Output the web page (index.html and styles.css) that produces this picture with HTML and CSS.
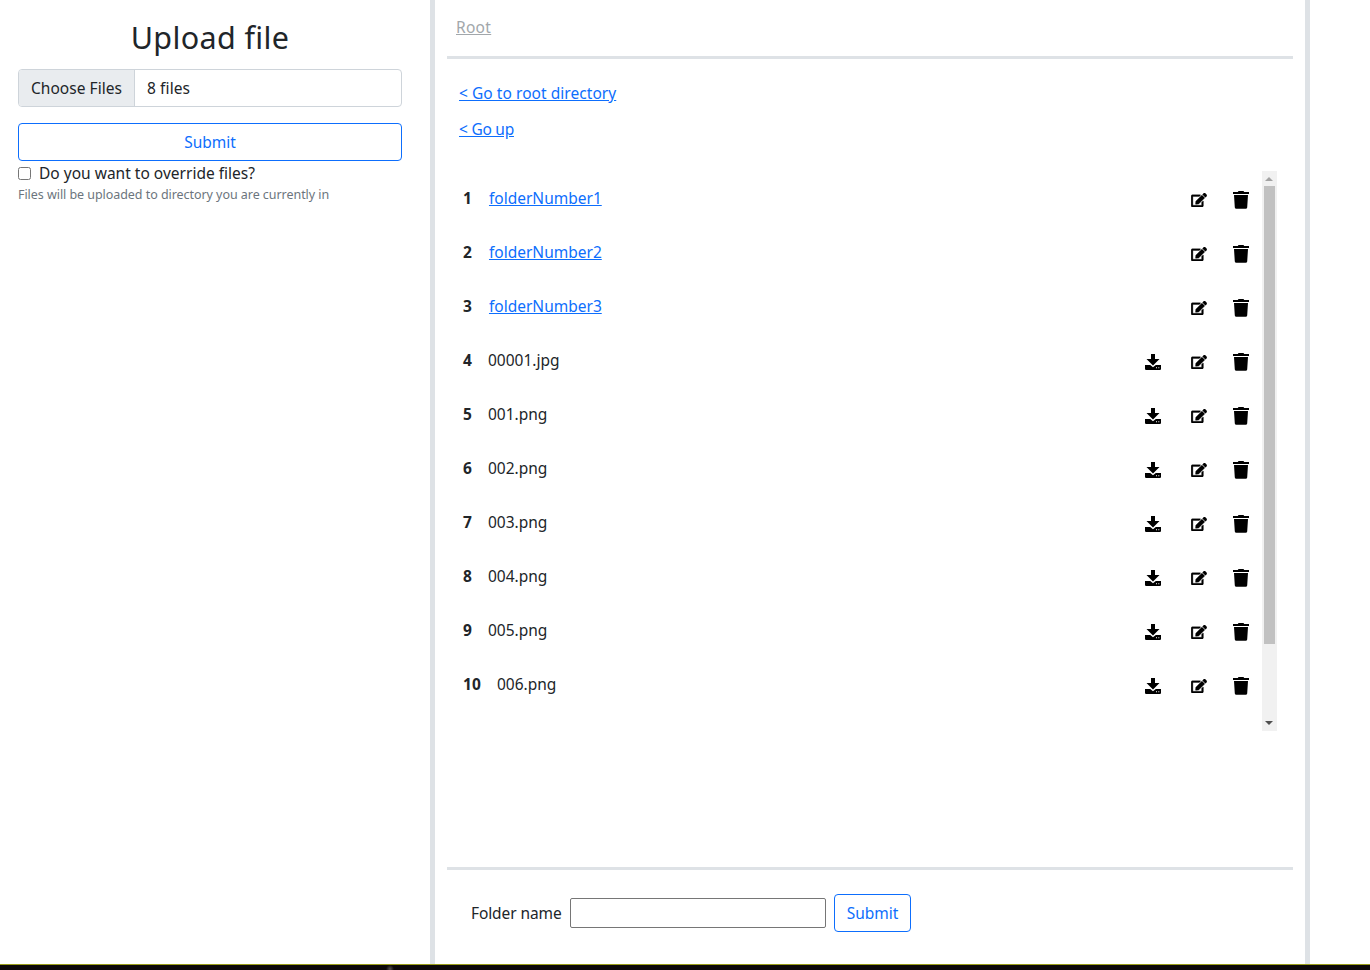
FILE: index.html
```html
<!DOCTYPE html>
<html lang="en">
<head>
<meta charset="utf-8">
<title>Files</title>
<link rel="stylesheet" href="styles.css">
</head>
<body>
<svg class="sprite" aria-hidden="true">
  <symbol id="download" viewBox="0 0 16 16"><path d="M6 0h4v5h4.500L8 11.500 1.500 5H6z"/><path d="M0 11h5.200L8 13.200 10.800 11H16v4.200l-.8.8H.8l-.8-.8zM11 13.200v1h1v-1zM13.300 13.200v1h1v-1z" fill-rule="evenodd"/></symbol>
  <symbol id="edit" viewBox="0 0 576 512"><path d="M402.600 83.200l90.200 90.200c3.800 3.800 3.800 10 0 13.800L274.400 405.600l-92.800 10.300c-12.400 1.400-22.900-9.100-21.500-21.500l10.300-92.800L388.800 83.200c3.800-3.800 10-3.800 13.800 0zm162-22.900l-48.800-48.800c-15.200-15.200-39.900-15.200-55.200 0l-35.400 35.400c-3.800 3.800-3.800 10 0 13.800l90.200 90.200c3.800 3.800 10 3.800 13.800 0l35.400-35.400c15.200-15.300 15.200-40 0-55.200zM384 346.200V448H64V128h229.800c3.200 0 6.200-1.300 8.500-3.500l40-40c7.600-7.600 2.200-20.500-8.500-20.500H48C21.500 64 0 85.500 0 112v352c0 26.500 21.500 48 48 48h352c26.500 0 48-21.500 48-48V306.200c0-10.700-12.900-16-20.500-8.500l-40 40c-2.200 2.300-3.500 5.300-3.500 8.500z" stroke="#000" stroke-width="12"/></symbol>
  <symbol id="trash" viewBox="0 0 16 18"><path d="M0 1h4.800L5.500 0h5l.7 1H16v2H0zM1 4h14L14.200 16.400Q14 17.700 12.700 17.700H3.300Q2 17.700 1.800 16.400z"/></symbol>
</svg>
<div class="page">
  <aside class="upload">
    <h2 class="title">Upload file</h2>
    <div class="file-input"><span class="file-button">Choose Files</span><span class="file-value">8 files</span></div>
    <button class="button wide">Submit</button>
    <label class="override"><input type="checkbox" class="check"><span class="question">Do you want to override files?</span></label>
    <small class="hint">Files will be uploaded to directory you are currently in</small>
  </aside>
  <main class="browser">
    <header class="path"><a class="root">Root</a></header>
    <section class="content">
      <nav class="nav"><a class="link to-root">&lt; Go to root directory</a><a class="link up">&lt; Go up</a></nav>
      <div class="list">
        <div class="rows">
          <div class="row"><b class="num">1</b><a class="link folder">folderNumber1</a><svg class="edit"><use href="#edit"/></svg><svg class="trash"><use href="#trash"/></svg></div>
          <div class="row"><b class="num">2</b><a class="link folder">folderNumber2</a><svg class="edit"><use href="#edit"/></svg><svg class="trash"><use href="#trash"/></svg></div>
          <div class="row"><b class="num">3</b><a class="link folder">folderNumber3</a><svg class="edit"><use href="#edit"/></svg><svg class="trash"><use href="#trash"/></svg></div>
          <div class="row"><b class="num">4</b><span class="file">00001.jpg</span><svg class="download"><use href="#download"/></svg><svg class="edit"><use href="#edit"/></svg><svg class="trash"><use href="#trash"/></svg></div>
          <div class="row"><b class="num">5</b><span class="file">001.png</span><svg class="download"><use href="#download"/></svg><svg class="edit"><use href="#edit"/></svg><svg class="trash"><use href="#trash"/></svg></div>
          <div class="row"><b class="num">6</b><span class="file">002.png</span><svg class="download"><use href="#download"/></svg><svg class="edit"><use href="#edit"/></svg><svg class="trash"><use href="#trash"/></svg></div>
          <div class="row"><b class="num">7</b><span class="file">003.png</span><svg class="download"><use href="#download"/></svg><svg class="edit"><use href="#edit"/></svg><svg class="trash"><use href="#trash"/></svg></div>
          <div class="row"><b class="num">8</b><span class="file">004.png</span><svg class="download"><use href="#download"/></svg><svg class="edit"><use href="#edit"/></svg><svg class="trash"><use href="#trash"/></svg></div>
          <div class="row"><b class="num">9</b><span class="file">005.png</span><svg class="download"><use href="#download"/></svg><svg class="edit"><use href="#edit"/></svg><svg class="trash"><use href="#trash"/></svg></div>
          <div class="row"><b class="num">10</b><span class="file">006.png</span><svg class="download"><use href="#download"/></svg><svg class="edit"><use href="#edit"/></svg><svg class="trash"><use href="#trash"/></svg></div>
        </div>
        <div class="scrollbar"><i class="arrow-up"></i><i class="thumb"></i><i class="arrow-down"></i></div>
      </div>
    </section>
    <footer class="create"><label class="folder-label" for="name">Folder name</label><input id="name" class="name"><button class="button">Submit</button></footer>
  </main>
</div>
<div class="desktop"></div>
</body>
</html>
```

FILE: styles.css
```css
* { box-sizing: border-box; }
body { margin: 0; height: 970px; overflow: hidden; display: flex; flex-direction: column; background: #fff; color: #212529; font: 15.5px/24px "Noto Sans", sans-serif; }
.sprite { position: absolute; width: 0; height: 0; }
.page { display: flex; height: 964px; }
.upload { width: 430px; padding: 18px 28px 0 18px; display: flex; flex-direction: column; }
.title { margin: 0 0 13px; font-size: 30.5px; line-height: 38px; font-weight: 400; text-align: center; letter-spacing: 0.36px; }
.file-input { display: flex; height: 38px; border: 1px solid #ced4da; border-radius: 4px; overflow: hidden; margin-bottom: 16px; white-space: nowrap; }
.file-button { width: 116px; padding: 6px 12px; background: #e9ecef; border-right: 1px solid #ced4da; letter-spacing: 0.04px; }
.file-value { padding: 6px 12px; letter-spacing: 0.1px; }
.button { height: 38px; width: 77px; padding: 0; border: 1px solid #0d6efd; border-radius: 4px; background: #fff; color: #0d6efd; font: inherit; letter-spacing: 0; }
.wide { width: 100%; }
.override { display: flex; align-items: center; height: 24px; }
.check { width: 13px; height: 13px; margin: 1px 8px 0 0; }
.question { letter-spacing: 0.01px; white-space: nowrap; }
.hint { font-size: 12.5px; line-height: 19px; color: #6c757d; white-space: nowrap; letter-spacing: -0.05px; }
.browser { width: 880px; padding: 0 12px; border: solid #dee2e6; border-width: 0 5px; display: flex; flex-direction: column; }
.path { height: 59px; padding: 15px 9px; border-bottom: 3px solid #dee2e6; }
.root { color: #a2a7ab; text-decoration: underline; letter-spacing: 0.3px; }
.content { height: 808px; padding: 22px 16px 0 12px; }
.nav { display: flex; flex-direction: column; align-items: flex-start; gap: 12px; height: 90px; }
.link { color: #0d6efd; text-decoration: underline; white-space: nowrap; }
.to-root { letter-spacing: 0.05px; }
.up { letter-spacing: -0.25px; }
.list { display: flex; height: 560px; }
.rows { width: 803px; }
.row { display: flex; align-items: center; height: 54px; padding: 0 13px 0 4px; }
.num { font-weight: 700; margin-right: 16px; letter-spacing: 0.1px; }
.folder, .file { margin-right: auto; }
.folder { padding-left: 1px; }
.row svg { flex: none; fill: #000; }
.download { width: 16px; height: 16px; margin: 4px 30px 0 0; }
.edit { width: 16px; height: 14px; margin: 4px 26px 0 0; }
.trash { width: 16px; height: 18px; margin-top: 4px; }
.scrollbar { width: 15px; background: #f1f1f1; display: flex; flex-direction: column; align-items: center; }
.arrow-up, .arrow-down { border: solid transparent; border-width: 0 4px; margin-right: 1px; }
.arrow-up { border-bottom: 4px solid #a3a3a3; margin-top: 6px; margin-bottom: 5px; }
.thumb { width: 11px; height: 458px; background: #c1c1c1; }
.arrow-down { border-top: 4px solid #505050; margin-top: auto; margin-bottom: 6px; }
.create { flex: 1; padding: 24px; border-top: 3px solid #dee2e6; display: flex; align-items: flex-start; }
.folder-label { width: 99px; line-height: 38px; white-space: nowrap; letter-spacing: -0.1px; }
.name { width: 256px; height: 30px; margin: 4px 8px 0 0; border: 1px solid #767676; border-radius: 2px; background: #fff; }
.desktop { height: 6px; border-top: 1px solid #989b18; background: radial-gradient(circle at 390px 4px, #55504f 0, #0c0809 4px); }
```
